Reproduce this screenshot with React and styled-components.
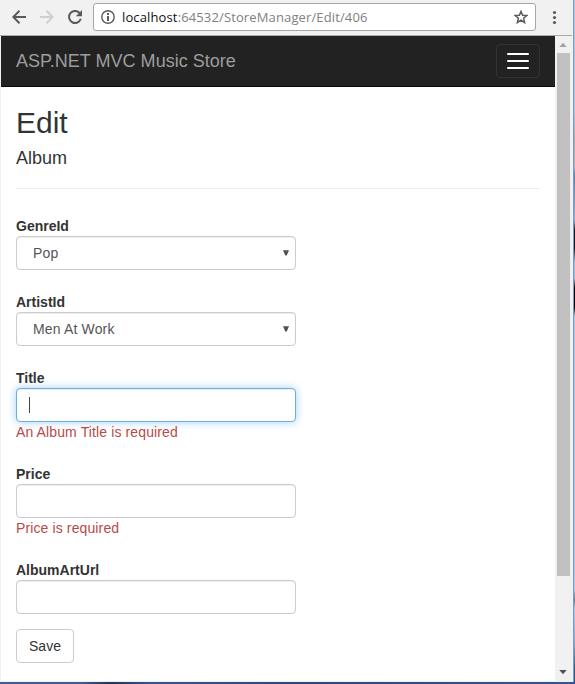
import React from "react";
import styled, { createGlobalStyle, css } from "styled-components";

const GlobalStyle = createGlobalStyle`
  *, *::before, *::after { box-sizing: border-box; }
  html, body { margin: 0; padding: 0; overflow: hidden; }
  body {
    font: 14px/20px "Liberation Sans", Arial, sans-serif;
    color: #333;
    background: #fff;
  }
`;

const Desktop = styled.div`
  width: 575px;
  height: 684px;
  display: grid;
  grid-template-columns: 573px 2px;
  grid-template-rows: 682px 2px;
`;

const BrowserWindow = styled.div`
  display: flex;
  flex-direction: column;
  background: #f1f1f1;
`;

const RightEdge = styled.div`
  border-left: 1px solid #7d9cc0;
  background: linear-gradient(
    to bottom,
    #a9c6e2 0, #a9c6e2 110px, #a8a8b0 140px, #a9b4c4 168px, #5b7fae 174px, #8fb0d4 220px,
    #101820 230px, #101820 248px, #9dbddc 262px, #9dbddc 278px,
    #05080c 288px, #05080c 308px, #a9c9e6 316px, #a9c9e6 590px,
    #6a7684 600px, #a9c9e6 608px, #8fb0d4 640px, #2c5488 670px
  );
`;

const BottomEdge = styled.div`
  grid-column: 1 / 3;
  background: linear-gradient(to right, #3d5f8f, #3d5f8f 80px, #1f3558 110px, #33588c 150px, #2a4a78 300px, #33588c);
`;

const Toolbar = styled.div`
  flex: none;
  height: 36px;
  display: flex;
  align-items: flex-start;
  border-bottom: 1px solid #a9a9a9;
  margin-right: 1px;
`;

const NavButton = styled.span`
  width: 28px;
  height: 34px;
  display: flex;
  align-items: center;
  justify-content: center;
  color: ${(p) => (p.$disabled ? "#cfcfcf" : "#5a5a5a")};
`;

const NavButtons = styled.div`
  display: flex;
  padding-left: 5px;
  width: 93px;
`;

const AddressBar = styled.div`
  width: 443px;
  height: 28px;
  margin-top: 3px;
  padding: 0 7px;
  display: flex;
  align-items: center;
  background: #fff;
  border: 1px solid #a6a6a6;
  border-radius: 3px;
`;

const Url = styled.span`
  flex: 1;
  margin-left: 7px;
  font: 13px/26px "Open Sans", "Noto Sans", sans-serif;
  letter-spacing: 0.13px;
  white-space: nowrap;
  color: #808080;
`;

const Host = styled.span`
  color: #111;
`;

const MenuDots = styled.svg`
  margin: 9px 0 0 16px;
`;

const Viewport = styled.div`
  flex: 1;
  display: grid;
  grid-template-columns: 554px 16px;
  margin-left: 1px;
`;

const Page = styled.div`
  background: #fff;
  margin-bottom: 1px;
`;

const Navbar = styled.nav`
  height: 51px;
  padding: 0 15px;
  display: flex;
  align-items: center;
  justify-content: space-between;
  background: #222;
  border-bottom: 1px solid #080808;
`;

const Brand = styled.a`
  font-size: 18px;
  line-height: 20px;
  letter-spacing: 0.02px;
  color: #9d9d9d;
  white-space: nowrap;
`;

const Toggle = styled.button`
  width: 44px;
  height: 34px;
  padding: 0;
  display: flex;
  flex-direction: column;
  align-items: center;
  justify-content: center;
  gap: 5px;
  background: transparent;
  border: 1px solid #333;
  border-radius: 4px;
`;

const ToggleBar = styled.span`
  width: 22px;
  height: 2px;
  border-radius: 1px;
  background: #fff;
`;

const Content = styled.main`
  padding: 19px 15px 0;
`;

const Title = styled.h2`
  margin: 0;
  font-size: 30px;
  line-height: 33px;
  font-weight: 400;
`;

const Subtitle = styled.h4`
  margin: 9px 0 0;
  font-size: 18px;
  line-height: 20px;
  font-weight: 400;
`;

const Rule = styled.hr`
  margin: 20px 0 27px;
  border: 0;
  border-top: 1px solid #eee;
`;

const Form = styled.div`
  display: flex;
  flex-direction: column;
  gap: 22px;
  width: 280px;
`;

const Field = styled.div`
  display: flex;
  flex-direction: column;
`;

const Label = styled.label`
  font-weight: 700;
  line-height: 20px;
`;

const Control = styled.div`
  height: 34px;
  padding: 0 6px 0 ${(p) => (p.$select ? 16 : 12)}px;
  display: flex;
  align-items: center;
  justify-content: space-between;
  letter-spacing: 0.15px;
  color: #555;
  background: #fff;
  border: 1px solid #ccc;
  border-radius: 4px;
  box-shadow: inset 0 1px 1px rgba(0, 0, 0, 0.075);
  ${(p) =>
    p.$focused &&
    css`
      border-color: #66afe9;
      box-shadow: inset 0 1px 1px rgba(0, 0, 0, 0.075), 0 0 8px rgba(102, 175, 233, 0.6);
    `}
`;

const Caret = styled.span`
  width: 1px;
  height: 16px;
  background: #444;
`;

const ErrorText = styled.span`
  line-height: 20px;
  letter-spacing: 0.12px;
  color: #b94a48;
`;

const SaveButton = styled.button`
  width: 58px;
  height: 34px;
  margin-top: 15px;
  padding: 0;
  font: inherit;
  color: #333;
  background: #fff;
  border: 1px solid #ccc;
  border-radius: 4px;
`;

const Scrollbar = styled.div`
  display: flex;
  flex-direction: column;
  align-items: center;
  background: #f1f1f1;
`;

const ScrollArrow = styled.svg`
  flex: none;
`;

const Thumb = styled.div`
  width: 13px;
  height: 523px;
  margin-bottom: auto;
  background: #c1c1c1;
`;

const fields = [
  { label: "GenreId", select: true, value: "Pop" },
  { label: "ArtistId", select: true, value: "Men At Work" },
  { label: "Title", focused: true, error: "An Album Title is required" },
  { label: "Price", error: "Price is required" },
  { label: "AlbumArtUrl" },
];

function FormField({ label, select, value, focused, error }) {
  return (
    <Field>
      <Label>{label}</Label>
      <Control $select={select} $focused={focused}>
        {value && <span>{value}</span>}
        {focused && <Caret />}
        {select && (
          <svg width="6" height="6" viewBox="0 0 6 6">
            <path d="M0 0.2H6L3.7 5.6H2.3Z" fill="#505050" />
          </svg>
        )}
      </Control>
      {error && <ErrorText>{error}</ErrorText>}
    </Field>
  );
}

export default function App() {
  return (
    <Desktop>
      <GlobalStyle />
      <BrowserWindow>
        <Toolbar>
          <NavButtons>
            <NavButton>
              <svg width="14" height="14" viewBox="0 0 14 14" fill="none" stroke="currentColor" strokeWidth="2">
                <path d="M14 7H1.5M7.5 0.8L1.3 7L7.5 13.2" />
              </svg>
            </NavButton>
            <NavButton $disabled>
              <svg width="14" height="14" viewBox="0 0 14 14" fill="none" stroke="currentColor" strokeWidth="2">
                <path d="M0 7H12.5M6.5 0.8L12.7 7L6.5 13.2" />
              </svg>
            </NavButton>
            <NavButton>
              <svg width="14" height="14" viewBox="0 0 14 14">
                <path d="M11.6 3A6 6 0 1 0 12.8 8.8" fill="none" stroke="currentColor" strokeWidth="2" />
                <path d="M14 0V6.2H7.8Z" fill="currentColor" />
              </svg>
            </NavButton>
          </NavButtons>
          <AddressBar>
            <svg width="14" height="14" viewBox="0 0 14 14">
              <circle cx="7" cy="7" r="6.2" fill="none" stroke="#5a5a5a" strokeWidth="1.4" />
              <path d="M6 3h2v2H6zM6 6h2v5H6z" fill="#5a5a5a" />
            </svg>
            <Url>
              <Host>localhost</Host>:64532/StoreManager/Edit/406
            </Url>
            <svg width="14" height="14" viewBox="0 0 14 14">
              <path
                d="M7 1.4L8.6 5.2L12.8 5.5L9.6 8.2L10.6 12.6L7 10.2L3.4 12.6L4.4 8.2L1.2 5.5L5.4 5.2Z"
                fill="none"
                stroke="#5a5a5a"
                strokeWidth="1.5"
              />
            </svg>
          </AddressBar>
          <MenuDots width="5" height="16" viewBox="0 0 5 16" fill="#5a5a5a">
            <circle cx="2.5" cy="3.5" r="1.6" />
            <circle cx="2.5" cy="8.5" r="1.6" />
            <circle cx="2.5" cy="13.5" r="1.6" />
          </MenuDots>
        </Toolbar>
        <Viewport>
          <Page>
            <Navbar>
              <Brand>ASP.NET MVC Music Store</Brand>
              <Toggle aria-label="Toggle navigation">
                <ToggleBar />
                <ToggleBar />
                <ToggleBar />
              </Toggle>
            </Navbar>
            <Content>
              <Title>Edit</Title>
              <Subtitle>Album</Subtitle>
              <Rule />
              <Form>
                {fields.map((f) => (
                  <FormField key={f.label} {...f} />
                ))}
              </Form>
              <SaveButton>Save</SaveButton>
            </Content>
          </Page>
          <Scrollbar>
            <ScrollArrow width="16" height="17" viewBox="0 0 16 17">
              <path d="M4.3 11L8 6.8L11.7 11Z" fill="#a3a3a3" />
            </ScrollArrow>
            <Thumb />
            <ScrollArrow width="16" height="17" viewBox="0 0 16 17">
              <path d="M4.3 5H11.7L8 9.2Z" fill="#505050" />
            </ScrollArrow>
          </Scrollbar>
        </Viewport>
      </BrowserWindow>
      <RightEdge />
      <BottomEdge />
    </Desktop>
  );
}
